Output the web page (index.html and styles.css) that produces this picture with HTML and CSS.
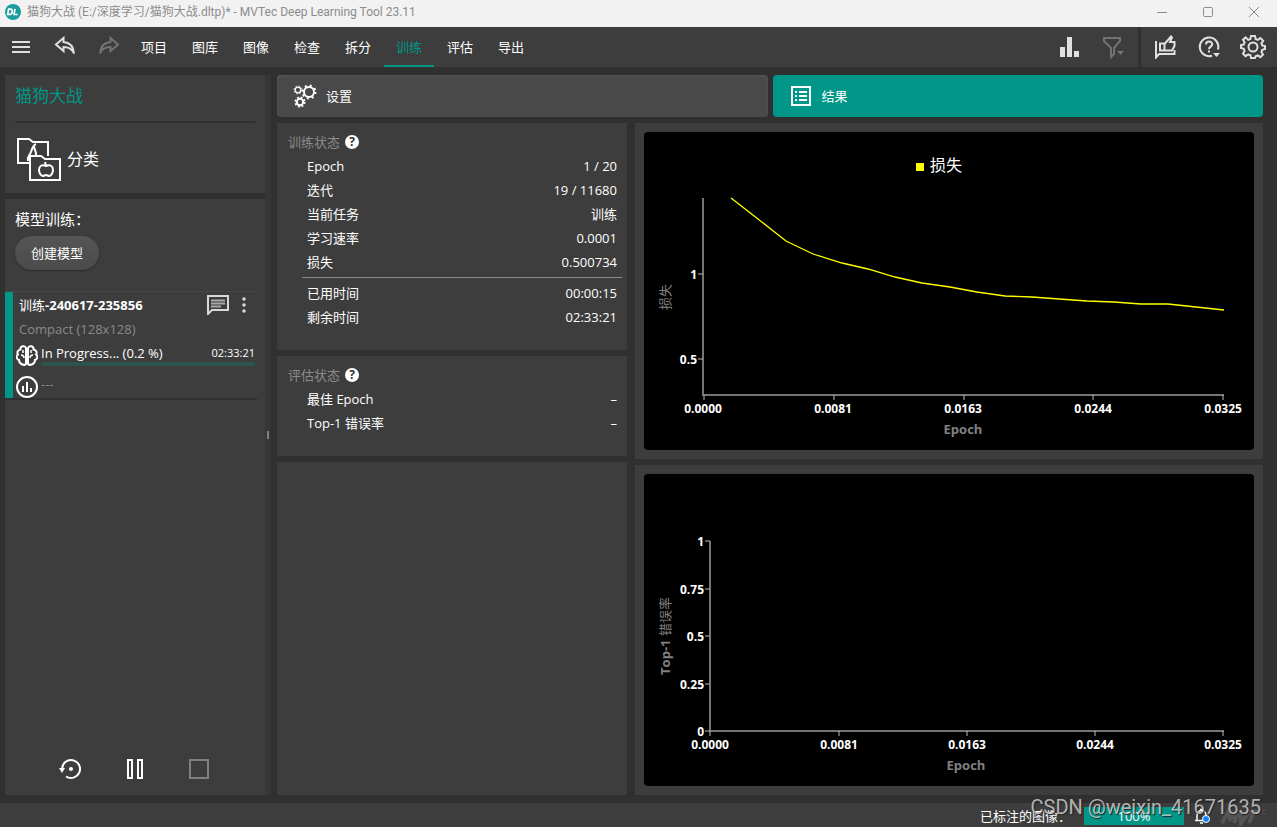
FILE: index.html
```html
<!DOCTYPE html>
<html lang="zh-CN">
<head>
  <meta charset="UTF-8">
  <meta name="viewport" content="width=device-width, initial-scale=1.0">
  <title>猫狗大战 - MVTec Deep Learning Tool 23.11</title>
  <link rel="stylesheet" href="styles.css">
</head>
<body>
  <header class="titlebar">
    <svg class="app-icon" width="16" height="16" viewBox="0 0 16 16">
      <circle cx="8" cy="8" r="8" fill="#1d9c9c"/>
      <path d="M3.6 5.2h1.6q2.4 0 2 2.6-.4 2.7-2.9 2.7H2.7zM10 4.8L9 10.5h3.6" fill="none" stroke="#fff" stroke-width="1.7"/>
    </svg>
    <span class="app-title">猫狗大战 (E:/深度学习/猫狗大战.dltp)* - MVTec Deep Learning Tool 23.11</span>
    <div class="window-controls">
      <button aria-label="最小化"><svg width="12" height="12" viewBox="0 0 12 12"><path d="M1 6.5h10"/></svg></button>
      <button aria-label="最大化"><svg width="12" height="12" viewBox="0 0 12 12"><rect x="1.5" y="1.5" width="9" height="9" rx="1"/></svg></button>
      <button aria-label="关闭"><svg width="12" height="12" viewBox="0 0 12 12"><path d="M1 1l10 10M11 1L1 11"/></svg></button>
    </div>
  </header>

  <div class="toolbar">
    <div class="tools">
      <button class="tool" aria-label="菜单">
        <svg width="24" height="24" viewBox="0 0 24 24"><path d="M3 7h18M3 12h18M3 17h18" stroke-width="2"/></svg>
      </button>
      <button class="tool" aria-label="撤销">
        <svg width="24" height="24" viewBox="0 0 24 24"><path d="M10.500 3L3 9.500l7.500 6.500v-4c5 0 8.500 1.500 10.500 6.500C20.500 11.500 16.500 7.500 10.500 7z" stroke-width="2"/></svg>
      </button>
      <button class="tool" aria-label="重做" disabled>
        <svg width="24" height="24" viewBox="0 0 24 24"><path d="M13.500 3L21 9.500 13.500 16v-4C8.500 12 5 13.500 3 18.500 3.500 11.500 7.500 7.500 13.500 7z" stroke-width="2"/></svg>
      </button>
    </div>
    <nav class="menu">
      <a href="#">项目</a>
      <a href="#">图库</a>
      <a href="#">图像</a>
      <a href="#">检查</a>
      <a href="#">拆分</a>
      <a href="#" class="active">训练</a>
      <a href="#">评估</a>
      <a href="#">导出</a>
    </nav>
    <div class="tools tools-view">
      <button class="tool" aria-label="统计">
        <svg width="24" height="24" viewBox="0 0 24 24"><path d="M3 12h5v10H3zM10 2h5v20h-5zM17 16h5v6h-5z" class="solid"/></svg>
      </button>
      <button class="tool" aria-label="筛选" disabled>
        <svg width="24" height="24" viewBox="0 0 24 24"><path d="M3 3h16v3l-6 7v6l-3 3v-9L3 6z" stroke-width="2"/><path d="M16 16h7l-3.500 4z" class="solid"/></svg>
      </button>
    </div>
    <div class="tools tools-help">
      <button class="tool" aria-label="反馈">
        <svg width="24" height="24" viewBox="0 0 24 24"><path d="M3 6v16.500l3-3.500h15.500V15" stroke-width="2"/><path d="M7 8.500h4.500v7H7zM11.500 9L18 1.500l1 1L17 7h4.500v4L19 15.500h-7.500" stroke-width="2"/></svg>
      </button>
      <button class="tool" aria-label="帮助">
        <svg width="24" height="24" viewBox="0 0 24 24"><path d="M15 20.700A9.300 9.300 0 1 1 21 14.500" stroke-width="2"/><path d="M9 9.500c0-4 6.200-3.800 6.200-.3 0 2.500-3.200 2.400-3.200 5" stroke-width="2"/><path d="M11 15.500h2v2h-2zM16 18h7l-3.500 4z" class="solid"/></svg>
      </button>
      <button class="tool" aria-label="设置">
        <svg width="26" height="26" viewBox="0 0 26 26"><path d="M11 2h4l.6 3 2.200.9L20.400 4l2.800 2.800-1.800 2.600.9 2.100 2.700.5v3l-2.700.8-.9 2.200 1.600 2.500-2.600 2.600-2.600-1.700-2.200.9L15 24h-4l-.6-2.700-2.200-.9-2.600 1.700L3 19.500 4.600 17l-.9-2.200L1 14v-3l2.700-.5.9-2.100L3 5.800 5.600 3.400l2.600 2.500 2.200-.9z" stroke-width="2"/><circle cx="13" cy="13" r="4.500" stroke-width="2"/></svg>
      </button>
    </div>
  </div>

  <main class="workspace">
    <aside class="sidebar">
      <section class="project">
        <h1>猫狗大战</h1>
        <div class="method">
          <svg width="46" height="44" viewBox="0 0 46 44" fill="none" stroke="#fff" stroke-width="2">
            <path d="M13 26H2V2h11l4 3h15v14"/>
            <path d="M20 7c-3 1-4 5-5 8-1 3-4 4-3 9M18 9c0 4 3 6 2 10"/>
            <path d="M14 19h11l4 3h15v21H14z"/>
            <path d="M30 29c-4-2-7 0-7 4 0 3 2 6 4 6 1 0 2-1 3-1s2 1 3 1c2 0 4-3 4-6 0-4-3-6-7-4zM30 29l-1-4"/>
          </svg>
          <span>分类</span>
        </div>
      </section>

      <section class="trainings">
        <h2>模型训练：</h2>
        <button class="create">创建模型</button>

        <article class="run">
          <div class="run-head">
            <h3><span>训练</span>-240617-235856</h3>
            <button class="run-btn" aria-label="备注">
              <svg width="22" height="20" viewBox="0 0 22 20" fill="none" stroke="#d8d8d8" stroke-width="2"><path d="M1 19V1h20v14H5z"/><path d="M4 5.500h14M4 8.500h14M4 11.500h10" stroke="#aaa"/></svg>
            </button>
            <button class="run-btn" aria-label="更多">
              <svg width="4" height="16" viewBox="0 0 4 16" fill="#ddd"><circle cx="2" cy="2" r="1.700"/><circle cx="2" cy="8" r="1.700"/><circle cx="2" cy="14" r="1.700"/></svg>
            </button>
          </div>
          <p class="run-type">Compact (128x128)</p>
          <div class="run-line">
            <svg width="22" height="22" viewBox="0 0 22 22" fill="none" stroke="#fff" stroke-width="2">
              <path d="M10 3C9 0 4 1 4.500 4.500 1 5 1 8 2 9.500-.5 11 1 15 3 15c0 4 5 6 7 4zM12 3c1-3 6-2 5.500 1.500C21 5 21 8 20 9.500c2.500 1.500 1 5.500-1 5.500 0 4-5 6-7 4z"/>
              <path d="M5 10c2 0 3 1 3 3M17 10c-2 0-3 1-3 3M7 5v3M15 5v3" stroke-width="1.500"/>
            </svg>
            <div class="run-progress">
              <div class="run-text"><span>In Progress... (0.2 %)</span><time>02:33:21</time></div>
              <div class="bar"></div>
            </div>
          </div>
          <div class="run-line run-eval">
            <svg width="22" height="22" viewBox="0 0 22 22" fill="none" stroke="#fff" stroke-width="2">
              <circle cx="11" cy="11" r="10"/><path d="M7 16v-6M11 16V6M15 16v-4"/>
            </svg>
            <span>---</span>
          </div>
        </article>

        <div class="controls">
          <button aria-label="重新开始">
            <svg width="24" height="24" viewBox="0 0 24 24" fill="none" stroke="#fff" stroke-width="2"><path d="M3 12a9 9 0 1 1 4 7.500"/><circle cx="12" cy="12" r="2" fill="#fff" stroke="none"/><path d="M0 11h6l-3 5z" fill="#fff" stroke="none"/></svg>
          </button>
          <button aria-label="暂停">
            <svg width="24" height="24" viewBox="0 0 24 24" fill="none" stroke="#fff" stroke-width="2"><path d="M5 3h4v18H5zM15 3h4v18h-4z"/></svg>
          </button>
          <button aria-label="停止" disabled>
            <svg width="24" height="24" viewBox="0 0 24 24" fill="none" stroke="#808080" stroke-width="2"><path d="M3 3h18v18H3z"/></svg>
          </button>
        </div>
      </section>
    </aside>

    <div class="splitter"></div>

    <div class="content">
      <div class="tabs">
        <button class="tab">
          <svg width="24" height="24" viewBox="0 0 24 24" fill="none" stroke="#fff">
            <circle cx="16" cy="8" r="5" stroke-width="2"/>
            <circle cx="16" cy="8" r="6.500" stroke-width="2" stroke-dasharray="2 3.100"/>
            <circle cx="5" cy="6" r="2.800" stroke-width="1.300"/>
            <circle cx="5" cy="6" r="4" stroke-width="1" stroke-dasharray="1.500 1.640"/>
            <circle cx="7" cy="18" r="3.200" stroke-width="2"/>
            <circle cx="7" cy="18" r="4.800" stroke-width="1.500" stroke-dasharray="2 1.770"/>
          </svg>
          设置
        </button>
        <button class="tab active">
          <svg width="24" height="24" viewBox="0 0 24 24" fill="none" stroke="#fff" stroke-width="2"><path d="M3 3h18v18H3zM6 8h2M10 8h8M6 12h2M10 12h8M6 16h2M10 16h8"/></svg>
          结果
        </button>
      </div>

      <div class="results">
        <div class="status">
          <section class="panel">
            <h2>训练状态 <button class="hint" aria-label="帮助">?</button></h2>
            <table>
              <tr><th>Epoch</th><td>1 / 20</td></tr>
              <tr><th>迭代</th><td>19 / 11680</td></tr>
              <tr><th>当前任务</th><td>训练</td></tr>
              <tr><th>学习速率</th><td>0.0001</td></tr>
              <tr><th>损失</th><td>0.500734</td></tr>
            </table>
            <hr>
            <table>
              <tr><th>已用时间</th><td>00:00:15</td></tr>
              <tr><th>剩余时间</th><td>02:33:21</td></tr>
            </table>
          </section>
          <section class="panel">
            <h2>评估状态 <button class="hint" aria-label="帮助">?</button></h2>
            <table>
              <tr><th>最佳 Epoch</th><td>–</td></tr>
              <tr><th>Top-1 错误率</th><td>–</td></tr>
            </table>
          </section>
          <section class="panel panel-empty"></section>
        </div>

        <div class="charts">
          <section class="chart chart-loss">
            <svg viewBox="0 0 610 318">
              <rect x="272" y="31" width="8" height="8" fill="#ff0"/>
              <text x="286" y="39" class="legend">损失</text>
              <path class="axis" d="M59 66v197h521"/>
              <path class="ticks" d="M54 142h5M54 227h5M60 263v5M190 263v5M320 263v5M449 263v5M579 263v5"/>
              <polyline class="loss" points="87,66 114,87 142,109 169,122 198,131 224,137 251,145 278,151 306,155 333,160 361,164 388,165 415,167 443,169 470,170 497,172 524,172 552,175 580,178"/>
              <g class="ylabels">
                <text x="53" y="147">1</text>
                <text x="53" y="232">0.5</text>
              </g>
              <g class="xlabels">
                <text x="59" y="281">0.0000</text>
                <text x="189" y="281">0.0081</text>
                <text x="319" y="281">0.0163</text>
                <text x="449" y="281">0.0244</text>
                <text x="579" y="281">0.0325</text>
              </g>
              <text x="319" y="302" class="name">Epoch</text>
              <text transform="translate(26 165) rotate(-90)" class="name"><tspan class="zh">损失</tspan></text>
            </svg>
          </section>
          <section class="chart chart-error">
            <svg viewBox="0 0 610 312">
              <path class="axis" d="M66 67v190h514"/>
              <path class="ticks" d="M61 67h5M61 115h5M61 162h5M61 210h5M61 257h5M66 257v5M195 257v5M323 257v5M451 257v5M579 257v5"/>
              <g class="ylabels">
                <text x="60" y="72">1</text>
                <text x="60" y="120">0.75</text>
                <text x="60" y="167">0.5</text>
                <text x="60" y="215">0.25</text>
                <text x="60" y="262">0</text>
              </g>
              <g class="xlabels">
                <text x="66" y="275">0.0000</text>
                <text x="195" y="275">0.0081</text>
                <text x="323" y="275">0.0163</text>
                <text x="451" y="275">0.0244</text>
                <text x="579" y="275">0.0325</text>
              </g>
              <text x="322" y="296" class="name">Epoch</text>
              <text transform="translate(26 162) rotate(-90)" class="name">Top-1 <tspan class="zh">错误率</tspan></text>
            </svg>
          </section>
        </div>
      </div>
    </div>
  </main>

  <footer class="statusbar">
    <span>已标注的图像：</span>
    <div class="labeled">100%</div>
    <button class="bell" aria-label="通知">
      <svg width="16" height="16" viewBox="0 0 16 16"><path d="M1 12.500h10M3 12V8q0-5 4.500-5.500 4.500 .5 4.500 5.500M6 1.500h3M6 15h3" fill="none" stroke="#fff" stroke-width="1.500"/><circle cx="12" cy="11" r="3.500" fill="#1683f8" stroke="#fff"/></svg>
    </button>
    <svg class="brand" width="48" height="20" viewBox="0 0 48 20"><path d="M2 17L8 6l2 7 8-7-4 11M20 6l1 11L29 6h8M34 6l-5 11" fill="none" stroke="#555" stroke-width="4"/><path d="M41 4h-3v4h3M46 4h-3v4h3" fill="none" stroke="#555"/></svg>
    <div class="watermark">CSDN @weixin_41671635</div>
  </footer>
</body>
</html>
```
FILE: styles.css
```css
* {
  box-sizing: border-box;
}

body {
  margin: 0;
  height: 100vh;
  display: flex;
  flex-direction: column;
  background: #303030;
  color: #fff;
  font: 13px/24px "Open Sans", "Noto Sans CJK SC", sans-serif;
}

h1, h2, h3, p {
  margin: 0;
  font-weight: normal;
}

button {
  padding: 0;
  border: none;
  background: none;
  color: inherit;
  font: inherit;
}

svg {
  display: block;
}

/* window title */
.titlebar {
  display: flex;
  align-items: center;
  height: 27px;
  padding: 0 0 4px 5px;
  background: #f2f2f2;
  color: #8c8c8c;
  font-family: Roboto, "Noto Sans CJK SC", sans-serif;
  font-size: 12px;
}

.app-title {
  margin-left: 6px;
  flex: 1;
}

.window-controls {
  display: flex;
}

.window-controls button {
  width: 46px;
  display: flex;
  justify-content: center;
}

.window-controls svg {
  fill: none;
  stroke: #8c8c8c;
}

/* toolbar */
.toolbar {
  display: flex;
  height: 40px;
  background: #3d3d3d;
}

.tools {
  display: flex;
  gap: 2px;
}

.tool {
  width: 42px;
  display: flex;
  align-items: center;
  justify-content: center;
}

.tool svg {
  fill: none;
  stroke: #e0e0e0;
}

.tool .solid {
  fill: #e0e0e0;
  stroke: none;
}

.tool:disabled svg {
  stroke: #737373;
}

.tool:disabled .solid {
  fill: #737373;
}

.menu {
  display: flex;
  gap: 1px;
  flex: 1;
  margin-left: -1px;
}

.menu a {
  width: 50px;
  color: #fff;
  line-height: 40px;
  text-align: center;
  text-decoration: none;
}

.menu a.active {
  color: #009688;
  border-bottom: 2px solid #009688;
}

.tools-view {
  padding-right: 4px;
}

.tools-help {
  padding: 0 3px;
  border-left: 3px solid #303030;
}

/* workspace */
.workspace {
  flex: 1;
  min-height: 0;
  display: flex;
  padding: 8px 14px 8px 5px;
}

.sidebar {
  width: 260px;
  display: flex;
  flex-direction: column;
  gap: 6px;
}

.sidebar section {
  background: #3d3d3d;
}

.project {
  height: 118px;
  padding: 0 10px;
}

.project h1 {
  height: 48px;
  border-bottom: 2px solid #303030;
  color: #009688;
  font-size: 17px;
  line-height: 42px;
}

.method {
  display: flex;
  align-items: center;
  gap: 5px;
  padding: 14px 1px;
  font-size: 16px;
}

.trainings {
  flex: 1;
  display: flex;
  flex-direction: column;
}

.trainings h2 {
  padding: 8px 10px 5px;
  font-size: 15px;
}

.create {
  width: 84px;
  height: 34px;
  margin: 0 10px;
  border-radius: 17px;
  background: linear-gradient(#555, #4b4b4b);
  box-shadow: 0 1px 2px #2a2a2a;
}

.run {
  height: 108px;
  margin: 22px 8px 0 0;
  padding: 1px 2px 0 14px;
  border-bottom: 2px solid #303030;
  background: linear-gradient(to right, #009688 8px, transparent 8px);
  box-shadow: 0 -1px #454545;
}

.run-head {
  display: flex;
  align-items: center;
}

.run-head h3 {
  flex: 1;
  font-size: 13px;
  font-weight: bold;
}

.run-head h3 span {
  font-weight: normal;
}

.run-btn + .run-btn {
  margin: 0 9px 0 13px;
}

.run-type {
  color: #8a8a8a;
}

.run-line {
  display: flex;
  align-items: flex-start;
  gap: 3px;
  height: 31px;
  margin-left: -3px;
}

.run-line > svg {
  margin-top: 4px;
}

.run-progress {
  flex: 1;
}

.run-text {
  display: flex;
  justify-content: space-between;
  height: 21px;
}

.run-text time {
  font-size: 11px;
}

.bar {
  height: 4px;
  background: #2b544f;
}

.run-eval {
  color: #8a8a8a;
}

.controls {
  display: flex;
  justify-content: center;
  gap: 40px;
  margin-top: auto;
  padding: 14px 0;
}

.splitter {
  width: 12px;
  display: flex;
  align-items: center;
  border-right: 6px solid #303030;
  background: #363636;
}

.splitter::before {
  content: "";
  width: 2px;
  height: 8px;
  margin-left: 2px;
  background: #808080;
}

.content {
  flex: 1;
  min-width: 0;
  display: flex;
  flex-direction: column;
  gap: 6px;
}

.tabs {
  display: flex;
  gap: 5px;
}

.tab {
  flex: 1;
  display: flex;
  align-items: center;
  gap: 9px;
  height: 42px;
  padding: 0 16px;
  border-radius: 4px;
  background: #494949;
  box-shadow: inset 0 1px 3px #5a5a5a;
}

.tab.active {
  background: #009688;
  box-shadow: none;
}

.results {
  flex: 1;
  min-height: 0;
  display: flex;
  gap: 8px;
}

.status {
  width: 350px;
  display: flex;
  flex-direction: column;
  gap: 6px;
}

.panel {
  padding: 7px 5px 21px 11px;
  background: #3d3d3d;
}

.panel-empty {
  flex: 1;
}

.panel h2 {
  display: flex;
  align-items: center;
  gap: 5px;
  color: #8a8a8a;
  font-size: 13px;
}

.hint {
  width: 14px;
  height: 14px;
  border-radius: 7px;
  background: #fff;
  color: #303030;
  font-size: 12px;
  font-weight: bold;
  line-height: 14px;
}

.panel table {
  width: 100%;
  padding: 0 5px 0 19px;
  border-spacing: 0;
}

.panel th,
.panel td {
  height: 24px;
  padding: 0;
  font-weight: normal;
  text-align: left;
}

.panel td {
  text-align: right;
}

.panel hr {
  height: 1px;
  margin: 3px 0 3px 14px;
  border: none;
  background: #8a8a8a;
}

/* charts */
.charts {
  flex: 1;
  min-width: 0;
  display: flex;
  flex-direction: column;
  gap: 6px;
}

.chart {
  min-height: 0;
  padding: 9px;
  background: #3d3d3d;
}

.chart-loss {
  flex: 1 1 336px;
}

.chart-error {
  flex: 1 1 330px;
}

.chart svg {
  width: 100%;
  height: 100%;
  border-radius: 4px;
  background: #000;
}

.axis {
  fill: none;
  stroke: #757575;
  stroke-width: 2;
}

.ticks {
  stroke: #bbb;
}

.loss {
  fill: none;
  stroke: #ff0;
  stroke-width: 1.3;
}

.legend {
  fill: #fff;
  font-size: 16px;
}

.xlabels,
.ylabels {
  fill: #fff;
  font-size: 12px;
  font-weight: bold;
  text-anchor: middle;
}

.ylabels {
  text-anchor: end;
}

.name {
  fill: #808080;
  font-size: 13px;
  font-weight: bold;
  text-anchor: middle;
}

.name .zh {
  font-weight: normal;
}

/* status bar */
.statusbar {
  position: relative;
  display: flex;
  align-items: center;
  justify-content: flex-end;
  height: 24px;
  padding: 2px 9px 0 0;
  background: #3d3d3d;
}

.labeled {
  width: 100px;
  height: 18px;
  margin: 0 10px 0 13px;
  background: #009688;
  line-height: 18px;
  text-align: center;
}

.brand {
  margin-left: 10px;
}

.watermark {
  position: absolute;
  right: 16px;
  bottom: 8px;
  color: rgba(255, 255, 255, 0.65);
  font-family: Roboto, sans-serif;
  font-size: 20px;
  text-shadow: 1px 1px 1px #222;
}
```
